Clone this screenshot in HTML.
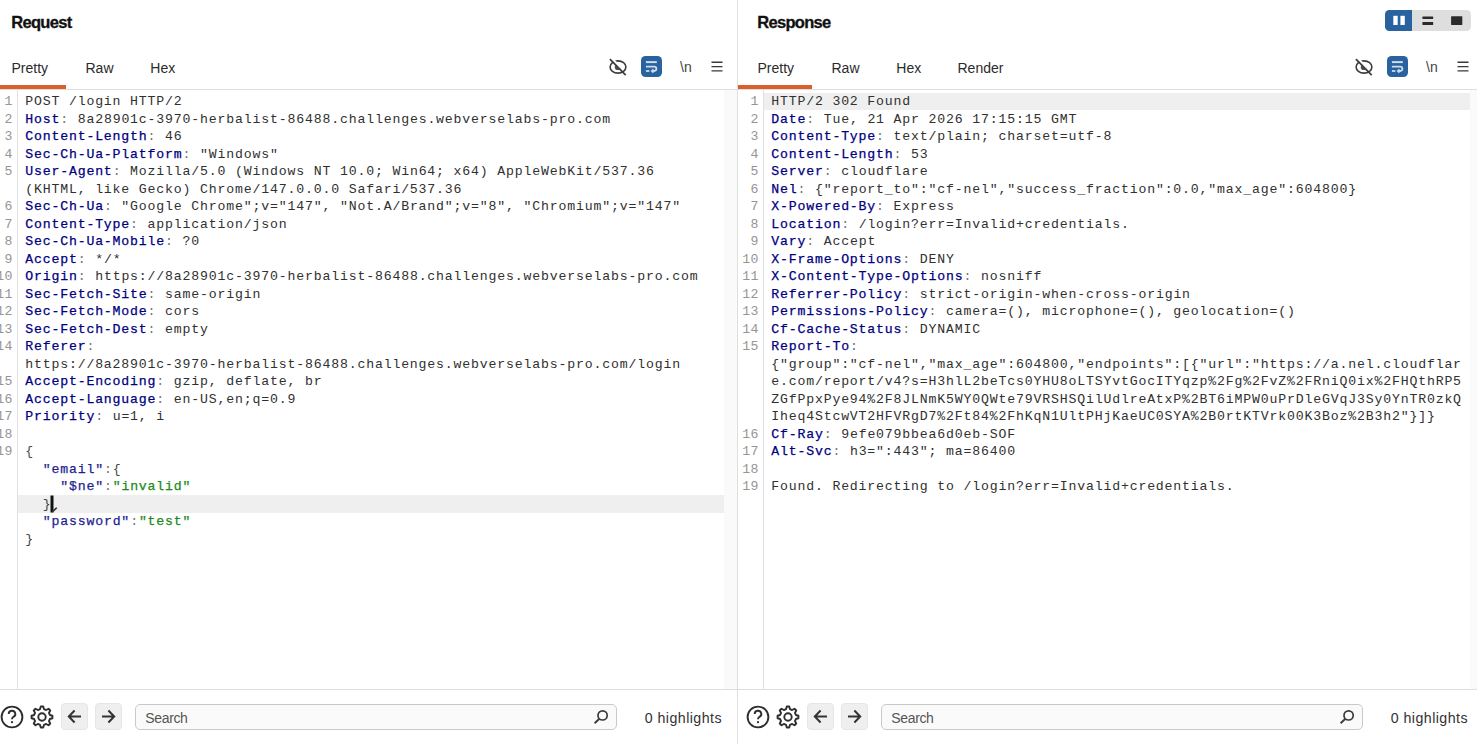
<!DOCTYPE html>
<html><head><meta charset="utf-8"><title>Burp Repeater</title><style>
*{margin:0;padding:0;box-sizing:border-box}
html,body{width:1477px;height:744px;overflow:hidden;background:#fff}
body{position:relative;font-family:"Liberation Sans",sans-serif;color:#222}
.pane{position:absolute;top:0;height:744px;overflow:visible}
.clipL{position:absolute;left:0;top:0;width:737px;height:744px;overflow:hidden}
.clipR{position:absolute;left:738px;top:0;width:739px;height:744px;overflow:hidden}
.vdiv{position:absolute;left:737px;top:0;width:1px;height:744px;background:#e0e0e0}
.title{position:absolute;left:19.2px;top:11.5px;font-weight:bold;font-size:16.5px;letter-spacing:-0.68px;color:#111;line-height:20px;-webkit-text-stroke:0.3px #111}
.tab{position:absolute;top:59px;font-size:14px;line-height:18px;color:#2b2b2b}
.uline{position:absolute;left:0;top:85px;width:74px;height:3.5px;background:#db5f2a}
.hdiv{position:absolute;left:0;top:89px;width:100%;height:1px;background:#dedede}
.iconrow .eye{position:absolute;left:612px;top:53px}
.wrapbtn{position:absolute;left:649px;top:56px;width:21px;height:21px;border-radius:4.5px;background:#2863a0}
.wrapbtn svg{position:absolute;left:0;top:0}
.nl{position:absolute;left:688px;top:58px;font-size:14px;line-height:18px;color:#444}
.iconrow .ham{position:absolute;left:719px;top:60.6px}
.editor{position:absolute;left:0;top:90px;width:100%;height:599px}
.gline{position:absolute;left:25px;top:0;width:1px;height:599px;background:#e0e0e0}
.sbar{position:absolute;left:732px;top:0;width:13px;height:599px;background:#fafafa}
.rows{position:absolute;left:0;top:2.6px;width:732px}
.r{position:relative;height:17.5px;line-height:17.5px;white-space:pre;font-family:"Liberation Mono",monospace;font-size:13.2px;letter-spacing:0.829px}
.r.hl{background:linear-gradient(to right,transparent 26px,#efefef 26px)}
.r i{position:absolute;top:0.5px;left:0;width:20.5px;text-align:right;font-style:normal;color:#959595;letter-spacing:0.2px}
.r b{position:absolute;top:0.5px;left:33.2px;font-weight:normal;color:#333}
.r .k{color:#000080;font-weight:normal;-webkit-text-stroke:0.25px #000080}
.r .c{color:#777}
.r .v{color:#303030}
.r .b{color:#444}
.r .j{color:#1f1f8f;font-weight:normal;-webkit-text-stroke:0.25px #1f1f8f}
.r .s{color:#1a8a1a;font-weight:normal;-webkit-text-stroke:0.25px #1a8a1a}
.caret{position:absolute;left:57px;top:402.7px}
.bdiv{position:absolute;left:0;top:689px;width:100%;height:1px;background:#dedede}
.foot .help{position:absolute;left:7.7px;top:704.9px}
.foot .gear{position:absolute;left:38.2px;top:704.6px}
.nb{position:absolute;top:703px;width:27px;height:27px;border-radius:4px;background:#efefef;border:1px solid #e6e6e6}
.nb svg{position:absolute;left:-1px;top:-1px}
.nb.back{left:69px}
.nb.fwd{left:103px}
.search{position:absolute;left:143px;top:704px;width:482px;height:26px;border:1px solid #c9c9c9;border-radius:5px;background:#fafafa}
.search span{position:absolute;left:9.3px;top:4px;font-size:14px;letter-spacing:-0.35px;line-height:18px;color:#555}
.search .mag{position:absolute;left:457px;top:4.3px}
.hl0{position:absolute;left:652.8px;top:708.9px;font-size:14.2px;letter-spacing:0.45px;line-height:18px;color:#333}
.seg{position:absolute;left:1385px;top:10px;width:86px;height:21px;border-radius:4.5px;background:#dedede;overflow:hidden}
.seg .on{position:absolute;left:0;top:0;width:27px;height:21px;background:#2863a0}
</style></head>
<body>
<div class="clipL"><div class="pane req" style="left:-8px;width:745px">
<div class="title">Request</div>
<div class="tab" style="left:19.5px">Pretty</div><div class="tab" style="left:93.5px">Raw</div><div class="tab" style="left:158.3px">Hex</div>
<div class="uline"></div>
<div class="hdiv"></div>
<div class="iconrow"><svg class="ic eye" width="28" height="28" viewBox="0 0 28 28"><ellipse cx="14.0" cy="14.0" rx="7.9" ry="6.1" fill="none" stroke="#3c3c3c" stroke-width="1.6"/><circle cx="13.6" cy="14.3" r="2.8" fill="#505050"/><path d="M7.2 5.0 L15.6 13.4" stroke="#fff" stroke-width="2.4"/><path d="M13.2 11.6 L16.6 15.0" stroke="#fff" stroke-width="3.4"/><path d="M5.9 6.1 L21.7 22.1" stroke="#3c3c3c" stroke-width="1.7"/></svg><div class="wrapbtn"><svg width="21" height="21" viewBox="0 0 21 21"><path d="M4.9 6.1 H15.8" stroke="#cfdcec" stroke-width="2"/><path d="M4.9 10.7 H13.2 A2.15 2.15 0 0 1 13.2 15.0 H11.4" fill="none" stroke="#cfdcec" stroke-width="1.8"/><path d="M12.4 13.2 L10.5 15.0 L12.4 16.8" fill="none" stroke="#cfdcec" stroke-width="1.3"/><path d="M4.9 15.0 H8.3" stroke="#cfdcec" stroke-width="1.8"/></svg></div><div class="nl">\n</div><svg class="ic ham" width="12" height="11" viewBox="0 0 12 11"><path d="M0.5 1.3 H11.5 M0.5 5.6 H11.5 M0.5 9.9 H11.5" stroke="#3a3a3a" stroke-width="1.4"/></svg></div>
<div class="editor">
<div class="gline"></div>
<div class="sbar"></div>
<div class="rows">
<div class="r"><i>1</i><b><span class="v">POST /login HTTP/2</span></b></div>
<div class="r"><i>2</i><b><span class="k">Host</span><span class="c">:</span><span class="v"> 8a28901c-3970-herbalist-86488.challenges.webverselabs-pro.com</span></b></div>
<div class="r"><i>3</i><b><span class="k">Content-Length</span><span class="c">:</span><span class="v"> 46</span></b></div>
<div class="r"><i>4</i><b><span class="k">Sec-Ch-Ua-Platform</span><span class="c">:</span><span class="v"> "Windows"</span></b></div>
<div class="r"><i>5</i><b><span class="k">User-Agent</span><span class="c">:</span><span class="v"> Mozilla/5.0 (Windows NT 10.0; Win64; x64) AppleWebKit/537.36</span></b></div>
<div class="r"><i></i><b><span class="v">(KHTML, like Gecko) Chrome/147.0.0.0 Safari/537.36</span></b></div>
<div class="r"><i>6</i><b><span class="k">Sec-Ch-Ua</span><span class="c">:</span><span class="v"> "Google Chrome";v="147", "Not.A/Brand";v="8", "Chromium";v="147"</span></b></div>
<div class="r"><i>7</i><b><span class="k">Content-Type</span><span class="c">:</span><span class="v"> application/json</span></b></div>
<div class="r"><i>8</i><b><span class="k">Sec-Ch-Ua-Mobile</span><span class="c">:</span><span class="v"> ?0</span></b></div>
<div class="r"><i>9</i><b><span class="k">Accept</span><span class="c">:</span><span class="v"> */*</span></b></div>
<div class="r"><i>10</i><b><span class="k">Origin</span><span class="c">:</span><span class="v"> https://8a28901c-3970-herbalist-86488.challenges.webverselabs-pro.com</span></b></div>
<div class="r"><i>11</i><b><span class="k">Sec-Fetch-Site</span><span class="c">:</span><span class="v"> same-origin</span></b></div>
<div class="r"><i>12</i><b><span class="k">Sec-Fetch-Mode</span><span class="c">:</span><span class="v"> cors</span></b></div>
<div class="r"><i>13</i><b><span class="k">Sec-Fetch-Dest</span><span class="c">:</span><span class="v"> empty</span></b></div>
<div class="r"><i>14</i><b><span class="k">Referer</span><span class="c">:</span></b></div>
<div class="r"><i></i><b><span class="v">https://8a28901c-3970-herbalist-86488.challenges.webverselabs-pro.com/login</span></b></div>
<div class="r"><i>15</i><b><span class="k">Accept-Encoding</span><span class="c">:</span><span class="v"> gzip, deflate, br</span></b></div>
<div class="r"><i>16</i><b><span class="k">Accept-Language</span><span class="c">:</span><span class="v"> en-US,en;q=0.9</span></b></div>
<div class="r"><i>17</i><b><span class="k">Priority</span><span class="c">:</span><span class="v"> u=1, i</span></b></div>
<div class="r"><i>18</i><b></b></div>
<div class="r"><i>19</i><b><span class="b">{</span></b></div>
<div class="r"><i></i><b><span class="v">  </span><span class="j">"email"</span><span class="c">:</span><span class="b">{</span></b></div>
<div class="r"><i></i><b><span class="v">    </span><span class="j">"$ne"</span><span class="c">:</span><span class="s">"invalid"</span></b></div>
<div class="r hl"><i></i><b><span class="v">  </span><span class="b">}</span></b></div>
<div class="r"><i></i><b><span class="v">  </span><span class="j">"password"</span><span class="c">:</span><span class="s">"test"</span></b></div>
<div class="r"><i></i><b><span class="b">}</span></b></div>
</div>
<svg class="caret" width="12" height="20" viewBox="0 0 12 20"><path d="M1.5 2.5 H4.5 V19.5 H1.5 Z" fill="#111"/><path d="M3.8 18.4 L7.3 15.2" stroke="#333" stroke-width="1.6" stroke-linecap="round"/></svg>
</div>
<div class="bdiv"></div>
<div class="foot"><svg class="help" width="24" height="24" viewBox="0 0 24 24"><circle cx="12" cy="12" r="10.4" fill="none" stroke="#2e2e2e" stroke-width="1.9"/><path d="M8.7 9.0 A3.3 3.2 0 1 1 13.5 11.8 C12.4 12.5 12 13.1 12 14.3" fill="none" stroke="#2e2e2e" stroke-width="1.9"/><circle cx="12" cy="17.2" r="1.1" fill="#2e2e2e"/></svg><svg class="gear" width="24" height="24" viewBox="0 0 24 24"><path d="M19.85 9.99 L22.43 10.77 L22.43 13.23 L19.85 14.01 L18.97 16.12 L20.25 18.50 L18.50 20.25 L16.12 18.97 L14.01 19.85 L13.23 22.43 L10.77 22.43 L9.99 19.85 L7.88 18.97 L5.50 20.25 L3.75 18.50 L5.03 16.12 L4.15 14.01 L1.57 13.23 L1.57 10.77 L4.15 9.99 L5.03 7.88 L3.75 5.50 L5.50 3.75 L7.88 5.03 L9.99 4.15 L10.77 1.57 L13.23 1.57 L14.01 4.15 L16.12 5.03 L18.50 3.75 L20.25 5.50 L18.97 7.88 Z" fill="none" stroke="#2e2e2e" stroke-width="1.9" stroke-linejoin="round"/><circle cx="12" cy="12" r="3.7" fill="none" stroke="#2e2e2e" stroke-width="1.9"/></svg><div class="nb back"><svg width="27" height="27" viewBox="0 0 27 27"><path d="M8 13.5 H20 M13.6 7.5 L7.8 13.5 L13.6 19.5" fill="none" stroke="#333" stroke-width="2"/></svg></div><div class="nb fwd"><svg width="27" height="27" viewBox="0 0 27 27"><path d="M7 13.5 H19 M13.4 7.5 L19.2 13.5 L13.4 19.5" fill="none" stroke="#333" stroke-width="2"/></svg></div><div class="search"><span>Search</span><svg class="mag" width="16" height="16" viewBox="0 0 16 16"><circle cx="9.6" cy="6.4" r="4.6" fill="none" stroke="#3a3a3a" stroke-width="1.7"/><path d="M6.4 9.7 L1.6 14.2" stroke="#3a3a3a" stroke-width="1.9"/></svg></div><div class="hl0">0 highlights</div></div>
</div></div>
<div class="vdiv"></div>
<div class="clipR"><div class="pane resp" style="left:0px;width:745px">
<div class="title">Response</div>
<div class="tab" style="left:19.5px">Pretty</div><div class="tab" style="left:93.5px">Raw</div><div class="tab" style="left:158.3px">Hex</div><div class="tab" style="left:219.5px">Render</div>
<div class="uline"></div>
<div class="hdiv"></div>
<div class="iconrow"><svg class="ic eye" width="28" height="28" viewBox="0 0 28 28"><ellipse cx="14.0" cy="14.0" rx="7.9" ry="6.1" fill="none" stroke="#3c3c3c" stroke-width="1.6"/><circle cx="13.6" cy="14.3" r="2.8" fill="#505050"/><path d="M7.2 5.0 L15.6 13.4" stroke="#fff" stroke-width="2.4"/><path d="M13.2 11.6 L16.6 15.0" stroke="#fff" stroke-width="3.4"/><path d="M5.9 6.1 L21.7 22.1" stroke="#3c3c3c" stroke-width="1.7"/></svg><div class="wrapbtn"><svg width="21" height="21" viewBox="0 0 21 21"><path d="M4.9 6.1 H15.8" stroke="#cfdcec" stroke-width="2"/><path d="M4.9 10.7 H13.2 A2.15 2.15 0 0 1 13.2 15.0 H11.4" fill="none" stroke="#cfdcec" stroke-width="1.8"/><path d="M12.4 13.2 L10.5 15.0 L12.4 16.8" fill="none" stroke="#cfdcec" stroke-width="1.3"/><path d="M4.9 15.0 H8.3" stroke="#cfdcec" stroke-width="1.8"/></svg></div><div class="nl">\n</div><svg class="ic ham" width="12" height="11" viewBox="0 0 12 11"><path d="M0.5 1.3 H11.5 M0.5 5.6 H11.5 M0.5 9.9 H11.5" stroke="#3a3a3a" stroke-width="1.4"/></svg></div>
<div class="editor">
<div class="gline"></div>
<div class="sbar"></div>
<div class="rows">
<div class="r hl"><i>1</i><b><span class="v">HTTP/2 302 Found</span></b></div>
<div class="r"><i>2</i><b><span class="k">Date</span><span class="c">:</span><span class="v"> Tue, 21 Apr 2026 17:15:15 GMT</span></b></div>
<div class="r"><i>3</i><b><span class="k">Content-Type</span><span class="c">:</span><span class="v"> text/plain; charset=utf-8</span></b></div>
<div class="r"><i>4</i><b><span class="k">Content-Length</span><span class="c">:</span><span class="v"> 53</span></b></div>
<div class="r"><i>5</i><b><span class="k">Server</span><span class="c">:</span><span class="v"> cloudflare</span></b></div>
<div class="r"><i>6</i><b><span class="k">Nel</span><span class="c">:</span><span class="v"> {"report_to":"cf-nel","success_fraction":0.0,"max_age":604800}</span></b></div>
<div class="r"><i>7</i><b><span class="k">X-Powered-By</span><span class="c">:</span><span class="v"> Express</span></b></div>
<div class="r"><i>8</i><b><span class="k">Location</span><span class="c">:</span><span class="v"> /login?err=Invalid+credentials.</span></b></div>
<div class="r"><i>9</i><b><span class="k">Vary</span><span class="c">:</span><span class="v"> Accept</span></b></div>
<div class="r"><i>10</i><b><span class="k">X-Frame-Options</span><span class="c">:</span><span class="v"> DENY</span></b></div>
<div class="r"><i>11</i><b><span class="k">X-Content-Type-Options</span><span class="c">:</span><span class="v"> nosniff</span></b></div>
<div class="r"><i>12</i><b><span class="k">Referrer-Policy</span><span class="c">:</span><span class="v"> strict-origin-when-cross-origin</span></b></div>
<div class="r"><i>13</i><b><span class="k">Permissions-Policy</span><span class="c">:</span><span class="v"> camera=(), microphone=(), geolocation=()</span></b></div>
<div class="r"><i>14</i><b><span class="k">Cf-Cache-Status</span><span class="c">:</span><span class="v"> DYNAMIC</span></b></div>
<div class="r"><i>15</i><b><span class="k">Report-To</span><span class="c">:</span></b></div>
<div class="r"><i></i><b><span class="v">{"group":"cf-nel","max_age":604800,"endpoints":[{"url":"https://a.nel.cloudflar</span></b></div>
<div class="r"><i></i><b><span class="v">e.com/report/v4?s=H3hlL2beTcs0YHU8oLTSYvtGocITYqzp%2Fg%2FvZ%2FRniQ0ix%2FHQthRP5</span></b></div>
<div class="r"><i></i><b><span class="v">ZGfPpxPye94%2F8JLNmK5WY0QWte79VRSHSQilUdlreAtxP%2BT6iMPW0uPrDleGVqJ3Sy0YnTR0zkQ</span></b></div>
<div class="r"><i></i><b><span class="v">Iheq4StcwVT2HFVRgD7%2Ft84%2FhKqN1UltPHjKaeUC0SYA%2B0rtKTVrk00K3Boz%2B3h2"}]}</span></b></div>
<div class="r"><i>16</i><b><span class="k">Cf-Ray</span><span class="c">:</span><span class="v"> 9efe079bbea6d0eb-SOF</span></b></div>
<div class="r"><i>17</i><b><span class="k">Alt-Svc</span><span class="c">:</span><span class="v"> h3=":443"; ma=86400</span></b></div>
<div class="r"><i>18</i><b></b></div>
<div class="r"><i>19</i><b><span class="v">Found. Redirecting to /login?err=Invalid+credentials.</span></b></div>
</div>

</div>
<div class="bdiv"></div>
<div class="foot"><svg class="help" width="24" height="24" viewBox="0 0 24 24"><circle cx="12" cy="12" r="10.4" fill="none" stroke="#2e2e2e" stroke-width="1.9"/><path d="M8.7 9.0 A3.3 3.2 0 1 1 13.5 11.8 C12.4 12.5 12 13.1 12 14.3" fill="none" stroke="#2e2e2e" stroke-width="1.9"/><circle cx="12" cy="17.2" r="1.1" fill="#2e2e2e"/></svg><svg class="gear" width="24" height="24" viewBox="0 0 24 24"><path d="M19.85 9.99 L22.43 10.77 L22.43 13.23 L19.85 14.01 L18.97 16.12 L20.25 18.50 L18.50 20.25 L16.12 18.97 L14.01 19.85 L13.23 22.43 L10.77 22.43 L9.99 19.85 L7.88 18.97 L5.50 20.25 L3.75 18.50 L5.03 16.12 L4.15 14.01 L1.57 13.23 L1.57 10.77 L4.15 9.99 L5.03 7.88 L3.75 5.50 L5.50 3.75 L7.88 5.03 L9.99 4.15 L10.77 1.57 L13.23 1.57 L14.01 4.15 L16.12 5.03 L18.50 3.75 L20.25 5.50 L18.97 7.88 Z" fill="none" stroke="#2e2e2e" stroke-width="1.9" stroke-linejoin="round"/><circle cx="12" cy="12" r="3.7" fill="none" stroke="#2e2e2e" stroke-width="1.9"/></svg><div class="nb back"><svg width="27" height="27" viewBox="0 0 27 27"><path d="M8 13.5 H20 M13.6 7.5 L7.8 13.5 L13.6 19.5" fill="none" stroke="#333" stroke-width="2"/></svg></div><div class="nb fwd"><svg width="27" height="27" viewBox="0 0 27 27"><path d="M7 13.5 H19 M13.4 7.5 L19.2 13.5 L13.4 19.5" fill="none" stroke="#333" stroke-width="2"/></svg></div><div class="search"><span>Search</span><svg class="mag" width="16" height="16" viewBox="0 0 16 16"><circle cx="9.6" cy="6.4" r="4.6" fill="none" stroke="#3a3a3a" stroke-width="1.7"/><path d="M6.4 9.7 L1.6 14.2" stroke="#3a3a3a" stroke-width="1.9"/></svg></div><div class="hl0">0 highlights</div></div>
</div></div>
<div class="seg"><div class="on"></div><svg style="position:absolute;left:0;top:0" width="86" height="21" viewBox="0 0 86 21"><rect x="8.3" y="5.8" width="4.4" height="9.2" fill="#fff"/><rect x="15.4" y="5.8" width="4.4" height="9.2" fill="#fff"/><rect x="37.4" y="6.5" width="10.8" height="2.4" rx="0.4" fill="#2b2b2b"/><rect x="37.4" y="11.9" width="10.8" height="3.1" rx="0.4" fill="#2b2b2b"/><rect x="66.1" y="6.2" width="11.2" height="8.8" rx="0.4" fill="#2b2b2b"/></svg></div>
</body></html>
